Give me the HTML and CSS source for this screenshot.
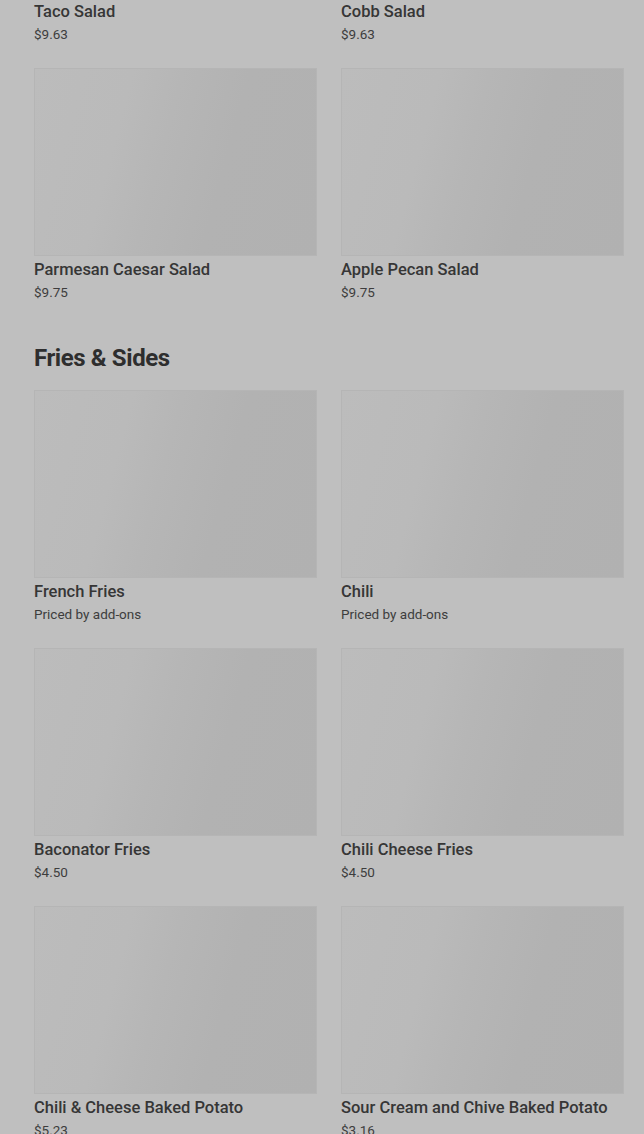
FILE: index.html
```html
<!DOCTYPE html>
<html lang="en">
<head>
  <meta charset="UTF-8">
  <meta name="viewport" content="width=device-width, initial-scale=1.0">
  <title>Menu</title>
  <link rel="stylesheet" href="styles.css">
</head>
<body>

  <div id="menu">
    <section class="category">
      <div class="grid">
        <div class="item">
          <div class="thumb"></div>
          <div class="name">Taco Salad</div>
          <div class="price">$9.63</div>
        </div>
        <div class="item">
          <div class="thumb"></div>
          <div class="name">Cobb Salad</div>
          <div class="price">$9.63</div>
        </div>
        <div class="item">
          <div class="thumb"></div>
          <div class="name">Parmesan Caesar Salad</div>
          <div class="price">$9.75</div>
        </div>
        <div class="item">
          <div class="thumb"></div>
          <div class="name">Apple Pecan Salad</div>
          <div class="price">$9.75</div>
        </div>
      </div>
    </section>

    <section class="category">
      <h2>Fries &amp; Sides</h2>
      <div class="grid">
        <div class="item">
          <div class="thumb"></div>
          <div class="name">French Fries</div>
          <div class="price">Priced by add-ons</div>
        </div>
        <div class="item">
          <div class="thumb"></div>
          <div class="name">Chili</div>
          <div class="price">Priced by add-ons</div>
        </div>
        <div class="item">
          <div class="thumb"></div>
          <div class="name">Baconator Fries</div>
          <div class="price">$4.50</div>
        </div>
        <div class="item">
          <div class="thumb"></div>
          <div class="name">Chili Cheese Fries</div>
          <div class="price">$4.50</div>
        </div>
        <div class="item">
          <div class="thumb"></div>
          <div class="name">Chili &amp; Cheese Baked Potato</div>
          <div class="price">$5.23</div>
        </div>
        <div class="item">
          <div class="thumb"></div>
          <div class="name">Sour Cream and Chive Baked Potato</div>
          <div class="price">$3.16</div>
        </div>
      </div>
    </section>
  </div>

</body>
</html>
```

FILE: styles.css
```css
body {
  margin: 0;
  background-color: #bfbfbf;
  color: #333333;
  font-family: Roboto, "Liberation Sans", sans-serif;
  overflow: hidden;
  height: 1134px;
}

#menu {
  margin-top: -190px;
  padding: 0 20px 0 34px;
}

.category h2 {
  margin: 42px 0 18px 0;
  font-size: 24px;
  line-height: 28px;
  font-weight: 700;
  letter-spacing: -0.4px;
  color: #2e2e2e;
}

.grid {
  display: grid;
  grid-template-columns: 283px 283px;
  column-gap: 24px;
  row-gap: 24px;
}

.thumb {
  height: 188px;
  background: linear-gradient(105deg, #bcbcbc 0%, #bababa 30%, #b6b6b6 45%, #b2b2b2 65%, #b1b1b1 100%);
  box-shadow: inset 0 0 0 1px #b5b5b5;
}

.name {
  margin-top: 4px;
  font-size: 16.5px;
  line-height: 20px;
  font-weight: 500;
  color: #363636;
  white-space: nowrap;
}

.price {
  margin-top: 2px;
  font-size: 13.5px;
  line-height: 20px;
  color: #3d3d3d;
}
```
